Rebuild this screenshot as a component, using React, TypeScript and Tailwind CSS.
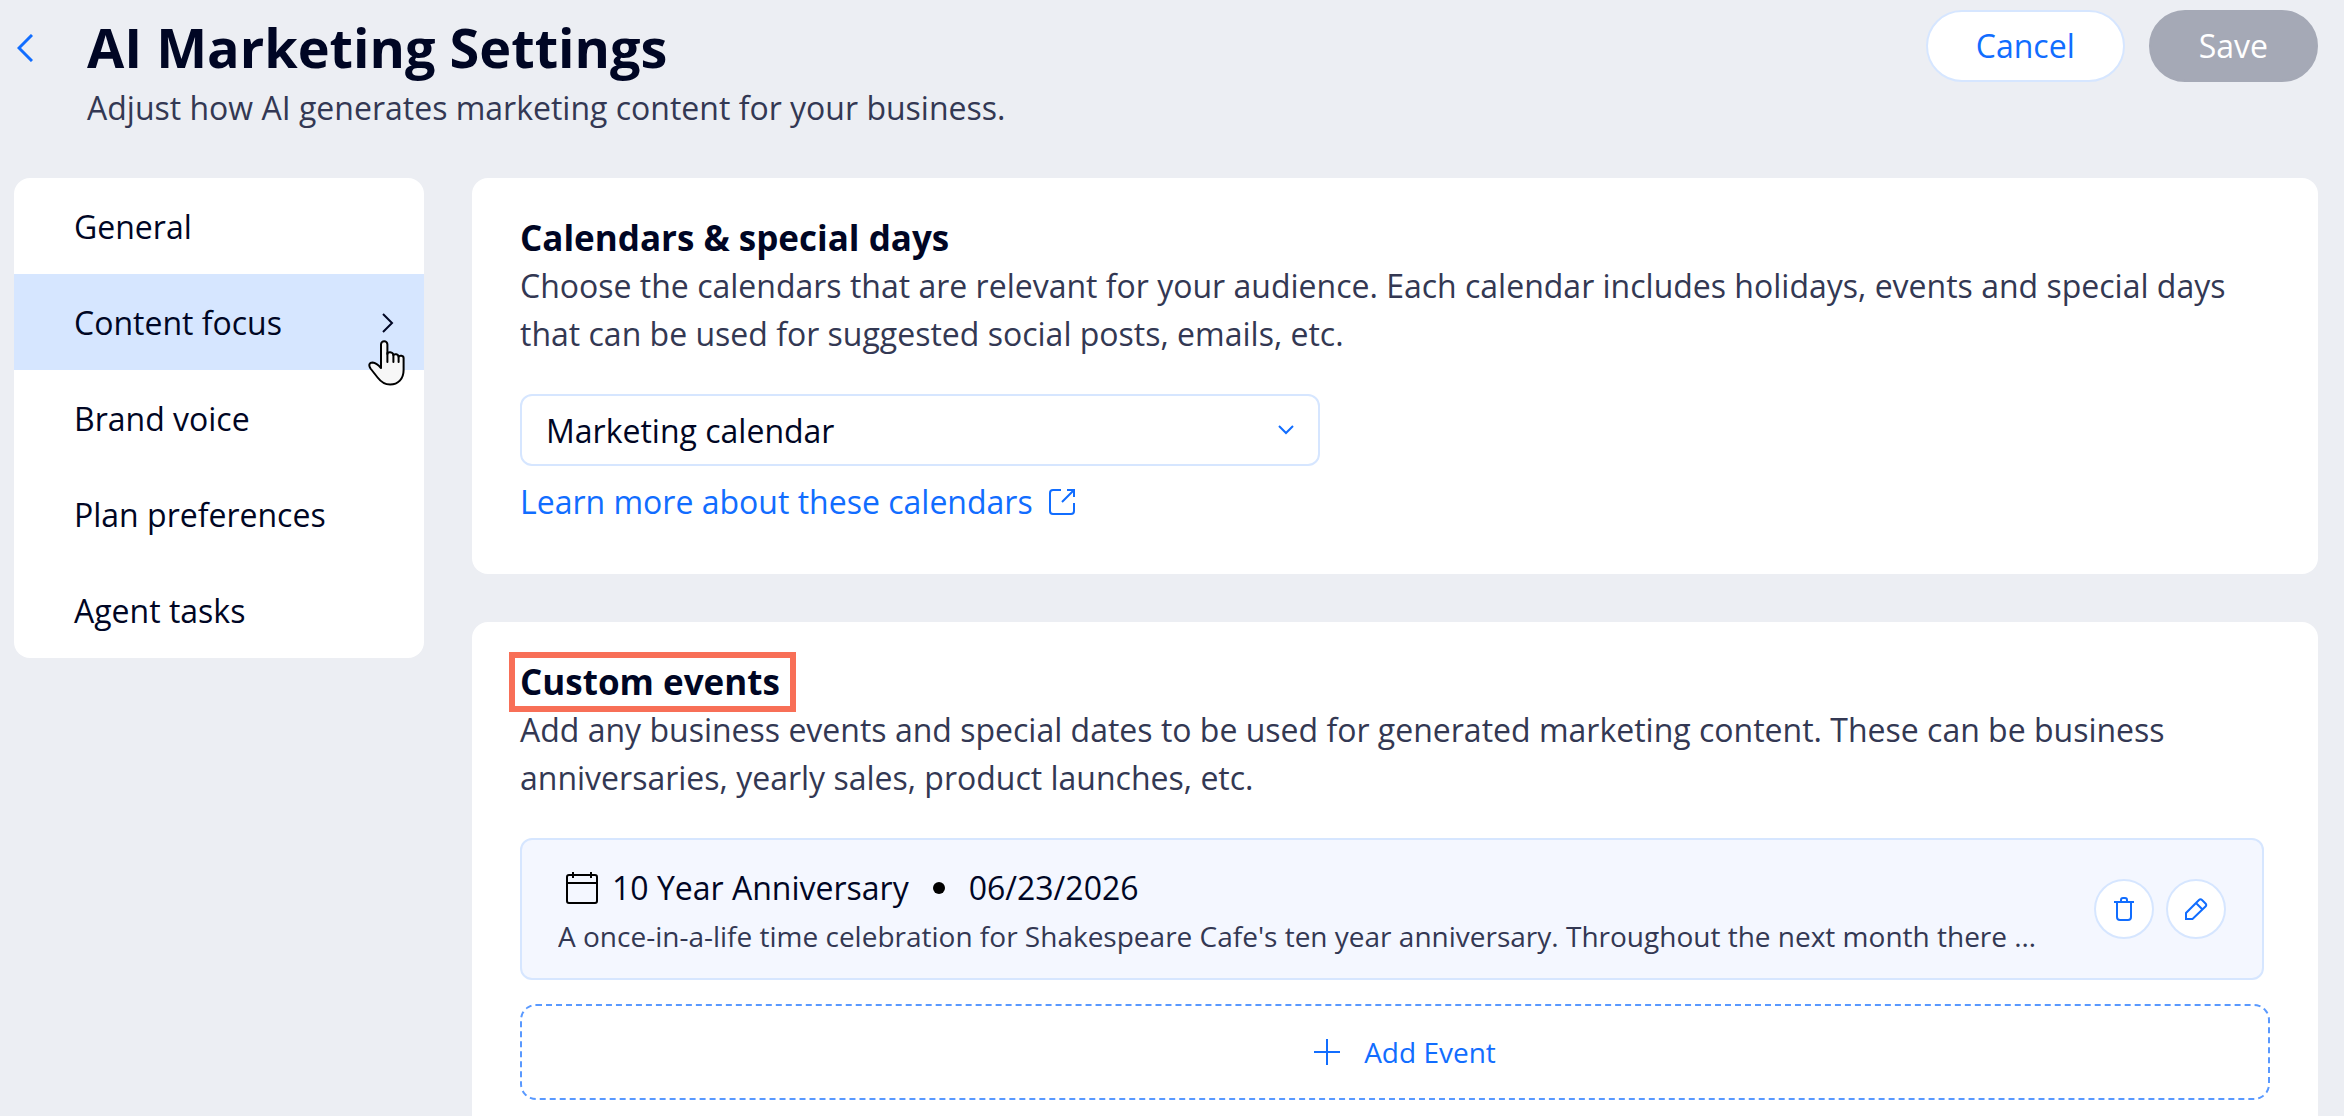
import { useState } from "react";

const menuItems = ["General", "Content focus", "Brand voice", "Plan preferences", "Agent tasks"];

const calendars = ["Marketing calendar"];

const events = [
    {
        title: "10 Year Anniversary",
        date: "06/23/2026",
        description:
            "A once-in-a-life time celebration for Shakespeare Cafe's ten year anniversary. Throughout the next month there …",
    },
];

const BackIcon = () => (
    <svg width="16" height="28" viewBox="0 0 16 28" fill="none" stroke="currentColor" strokeWidth="3">
        <path d="M15 1 2 14l13 13" />
    </svg>
);

const ChevronRight = () => (
    <svg width="12" height="20" viewBox="0 0 12 20" fill="none" stroke="currentColor" strokeWidth="2">
        <path d="m1 1 9 9-9 9" />
    </svg>
);

const ChevronDown = () => (
    <svg width="16" height="10" viewBox="0 0 16 10" fill="none" stroke="currentColor" strokeWidth="2">
        <path d="m1 1 7 7 7-7" />
    </svg>
);

const ExternalIcon = () => (
    <svg width="26" height="26" viewBox="0 0 26 26" fill="none" stroke="currentColor" strokeWidth="2">
        <path d="M12 1H4a3 3 0 0 0-3 3v18a3 3 0 0 0 3 3h18a3 3 0 0 0 3-3v-8M18 1h7v7M25 1 13 13" />
    </svg>
);

const CalendarIcon = () => (
    <svg width="32" height="32" viewBox="0 0 32 32" fill="none" stroke="black" strokeWidth="2">
        <rect x="1" y="3" width="30" height="28" rx="2" />
        <path d="M1 11h30M7 0v6M25 0v6" />
    </svg>
);

const TrashIcon = () => (
    <svg width="20" height="24" viewBox="0 0 20 24" fill="none" stroke="currentColor" strokeWidth="2">
        <path d="M0 5h20M7 5V3a2 2 0 0 1 2-2h2a2 2 0 0 1 2 2v2M3 5v15a3 3 0 0 0 3 3h8a3 3 0 0 0 3-3V5" />
    </svg>
);

const PencilIcon = () => (
    <svg width="24" height="24" viewBox="0 0 24 24" fill="none" stroke="currentColor" strokeWidth="2">
        <path d="M2 22v-6L15 3q1.500-1.500 3 0l3.500 3.500q1.500 1.500 0 3L8.500 22zM12 6l6 6" />
    </svg>
);

const PlusIcon = () => (
    <svg width="26" height="26" viewBox="0 0 26 26" fill="none" stroke="currentColor" strokeWidth="2">
        <path d="M13 0v26M0 13h26" />
    </svg>
);

const HandCursor = () => (
    <svg width="38" height="46" viewBox="0 0 38 46" fill="#f7f7f7" stroke="black" strokeWidth="2" strokeLinejoin="round" strokeLinecap="round">
        <path d="M13 28V4.500a3.200 3.200 0 0 1 6.400 0V14c0-2.500 5.600-2.500 6 1.200.8-1.800 5-1.200 5.200 1.500 1-1.700 5-1.200 5 1.300v12c0 9-5.500 14.500-13.500 14.500-6 0-9.500-3-12.500-7L2.500 28.500C.2 25 1.500 22.500 4.500 22.500c2.500.3 5.500 2 8.500 5.500z" />
        <path d="M19.400 13v9M25.400 15v7M30.600 16.500V22" fill="none" />
    </svg>
);

const App = () => {
    const [active, setActive] = useState("Content focus");
    const [calendar, setCalendar] = useState(calendars[0]);

    return (
        <div className="min-h-screen bg-[#eceef3] pl-3.5 pr-[26px] font-['Open_Sans',sans-serif] text-[32px] leading-[48px] text-[#000624]">
            <header className="flex items-start justify-between pt-2.5">
                <div className="flex">
                    <button aria-label="Back" className="mt-6 flex h-7 w-[73px] shrink-0 items-center pl-[3px] text-[#116dff]">
                        <BackIcon />
                    </button>
                    <div>
                        <h1 className="text-[54px] font-bold leading-[74px]">AI Marketing Settings</h1>
                        <p className="text-[#333853]">Adjust how AI generates marketing content for your business.</p>
                    </div>
                </div>
                <div className="flex gap-6">
                    <button className="h-[72px] rounded-full border-2 border-[#d6e6ff] bg-white px-12 font-medium text-[#116dff]">
                        Cancel
                    </button>
                    <button className="h-[72px] rounded-full border-2 border-[#a5a9b6] bg-[#a5a9b6] px-12 font-medium text-white">
                        Save
                    </button>
                </div>
            </header>

            <div className="mt-[46px] flex items-start gap-12">
                <nav className="w-[410px] shrink-0 overflow-hidden rounded-2xl bg-white">
                    {menuItems.map((item) => (
                        <button
                            key={item}
                            onClick={() => setActive(item)}
                            className={`relative flex h-24 w-full items-center justify-between pl-[60px] pr-[30px] pt-0.5 text-left ${item === active ? "z-10 bg-[#d6e6ff]" : ""}`}
                        >
                            {item}
                            {item === active && (
                                <>
                                    <ChevronRight />
                                    <span className="pointer-events-none absolute -bottom-4 right-[18px]">
                                        <HandCursor />
                                    </span>
                                </>
                            )}
                        </button>
                    ))}
                </nav>

                <main className="flex min-w-0 flex-1 flex-col gap-12">
                    <section className="rounded-2xl bg-white px-12 pb-12 pt-9">
                        <h2 className="text-[35px] font-bold">Calendars &amp; special days</h2>
                        <p className="text-[#333853]">
                            Choose the calendars that are relevant for your audience. Each calendar includes holidays, events and special days that can be used for suggested social posts, emails, etc.
                        </p>
                        <div className="relative mt-9 max-w-[800px]">
                            <select
                                aria-label="Calendar"
                                value={calendar}
                                onChange={(e) => setCalendar(e.target.value)}
                                className="h-[72px] w-full appearance-none rounded-xl border-2 border-[#d6e6ff] bg-white px-6 pt-0.5"
                            >
                                {calendars.map((name) => (
                                    <option key={name}>{name}</option>
                                ))}
                            </select>
                            <span className="pointer-events-none absolute inset-y-0 right-[26px] flex items-center text-[#116dff]">
                                <ChevronDown />
                            </span>
                        </div>
                        <a href="#" className="mt-3 flex w-fit items-center gap-4 text-[#116dff]">
                            Learn more about these calendars
                            <ExternalIcon />
                        </a>
                    </section>

                    <section className="rounded-2xl bg-white px-12 pb-12 pt-9">
                        <h2 className="relative w-fit text-[35px] font-bold">
                            Custom events
                            <span className="absolute -bottom-1.5 -left-[11px] -right-4 -top-1.5 border-6 border-[#f86f57]"></span>
                        </h2>
                        <p className="text-[#333853]">
                            Add any business events and special dates to be used for generated marketing content. These can be business anniversaries, yearly sales, product launches, etc.
                        </p>

                        {events.map((event) => (
                            <div
                                key={event.title}
                                className="mr-1.5 mt-9 flex items-center justify-between rounded-xl border-2 border-[#d6e6ff] bg-[#f4f7ff] px-9 py-[18px]"
                            >
                                <div className="min-w-0 pt-1.5">
                                    <div className="flex items-center pl-2 font-medium">
                                        <CalendarIcon />
                                        <h3 className="ml-3.5">{event.title}</h3>
                                        <span className="mx-6 size-3 rounded-full bg-black"></span>
                                        <span>{event.date}</span>
                                    </div>
                                    <p className="truncate text-[28px] text-[#333853]">{event.description}</p>
                                </div>
                                <div className="flex shrink-0 gap-3 text-[#116dff]">
                                    <button aria-label="Delete event" className="flex size-[60px] items-center justify-center rounded-full border-2 border-[#d6e6ff] bg-white">
                                        <TrashIcon />
                                    </button>
                                    <button aria-label="Edit event" className="flex size-[60px] items-center justify-center rounded-full border-2 border-[#d6e6ff] bg-white">
                                        <PencilIcon />
                                    </button>
                                </div>
                            </div>
                        ))}

                        <button className="mt-6 flex h-24 w-full items-center justify-center gap-6 rounded-2xl border-2 border-dashed border-[#5999ff] pl-5 text-[28px] text-[#116dff]">
                            <PlusIcon />
                            Add Event
                        </button>
                    </section>
                </main>
            </div>
        </div>
    );
};

export default App;
